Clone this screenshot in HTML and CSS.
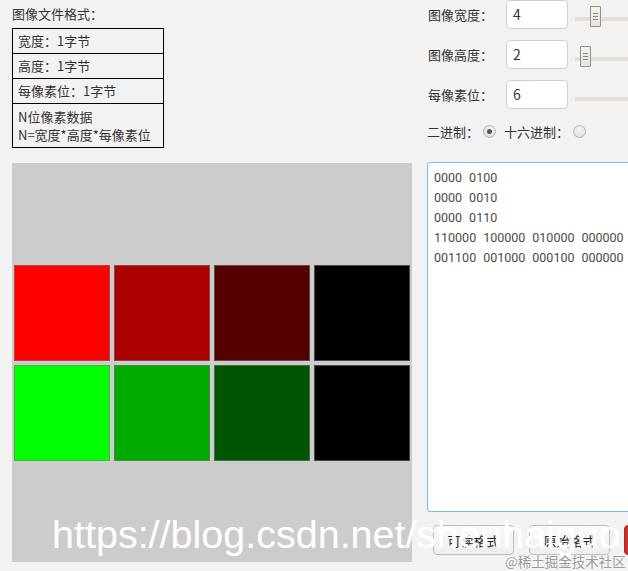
FILE: index.html
```html
<!DOCTYPE html>
<html lang="zh-CN">

<head>
    <meta charset="UTF-8">
    <meta name="viewport" content="width=device-width, initial-scale=1.0">
    <title>图像文件格式</title>
    <link rel="stylesheet" href="styles.css">
</head>

<body>
    <div class="app">
        <div class="left">
            <div class="title">图像文件格式：</div>
            <table class="format">
                <tr><td>宽度：1字节</td></tr>
                <tr><td>高度：1字节</td></tr>
                <tr><td>每像素位：1字节</td></tr>
                <tr><td class="multi">N位像素数据<br>N=宽度*高度*每像素位</td></tr>
            </table>
            <div class="canvas">
                <div class="pixels">
                    <div class="px" style="background: #ff0000"></div>
                    <div class="px" style="background: #aa0000"></div>
                    <div class="px" style="background: #550000"></div>
                    <div class="px" style="background: #000000"></div>
                    <div class="px" style="background: #00ff00"></div>
                    <div class="px" style="background: #00aa00"></div>
                    <div class="px" style="background: #005500"></div>
                    <div class="px" style="background: #000000"></div>
                </div>
            </div>
        </div>

        <div class="right">
            <div class="field">
                <span class="label">图像宽度：</span>
                <div class="num">4</div>
                <div class="slider"><div class="thumb" style="left: 15px"></div></div>
            </div>
            <div class="field">
                <span class="label">图像高度：</span>
                <div class="num">2</div>
                <div class="slider"><div class="thumb" style="left: 5px"></div></div>
            </div>
            <div class="field">
                <span class="label">每像素位：</span>
                <div class="num">6</div>
                <div class="slider"></div>
            </div>
            <div class="radios">
                <span>二进制：</span>
                <span class="radio checked"></span>
                <span>十六进制：</span>
                <span class="radio"></span>
            </div>
            <div class="output">0000 0100
0000 0010
0000 0110
110000 100000 010000 000000
001100 001000 000100 000000</div>
            <div class="buttons">
                <button class="btn">可读格式</button>
                <button class="btn">原始格式</button>
                <button class="btn red"></button>
            </div>
        </div>
    </div>

    <div class="watermark">https://blog.csdn.net/shenhaiguo</div>
    <div class="credit">@稀土掘金技术社区</div>
</body>

</html>
```

FILE: styles.css
```css
html,
body {
    margin: 0;
    height: 100%;
    overflow: hidden;
}

body {
    background: #f2f2f2;
    font-family: "Noto Sans CJK SC", "Noto Sans", sans-serif;
    font-size: 13px;
    color: #333;
    position: relative;
}

.app {
    display: flex;
    gap: 15px;
}

.left {
    padding: 5px 0 0 12px;
    width: 400px;
    flex: none;
}

.title {
    height: 18px;
    line-height: 18px;
}

.format {
    margin-top: 5px;
    width: 152px;
    border-collapse: collapse;
}

.format td {
    border: 1px solid #000;
    height: 24px;
    padding: 0 0 0 5px;
    line-height: 18px;
}

.format td.multi {
    height: 42px;
    line-height: 18px;
    padding-top: 1px;
}

.canvas {
    margin-top: 15px;
    width: 400px;
    height: 399px;
    background: #cccccc;
    display: flex;
    align-items: center;
    justify-content: center;
}

.pixels {
    display: grid;
    grid-template-columns: repeat(4, 96px);
    grid-auto-rows: 96px;
    gap: 4px;
}

.px {
    box-sizing: border-box;
    border: 1px solid rgba(120, 120, 120, 0.6);
}

.right {
    width: 240px;
    flex: none;
}

.field {
    display: flex;
    align-items: center;
    height: 29px;
    margin-bottom: 11px;
}

.label {
    width: 78px;
    padding-left: 1px;
}

.num {
    box-sizing: border-box;
    width: 62px;
    height: 29px;
    background: #fff;
    border: 1px solid #cfcfcf;
    border-radius: 4px;
    padding: 2px 0 0 6px;
    font-size: 14px;
    line-height: 22px;
}

.slider {
    position: relative;
    margin-left: 7px;
    width: 90px;
    height: 4px;
    background: #e4e0d9;
    margin-top: 8px;
}

.thumb {
    position: absolute;
    top: -11px;
    box-sizing: border-box;
    width: 11px;
    height: 21px;
    border: 1px solid #948f88;
    border-radius: 1px;
    background: linear-gradient(#f4f2ee, #e8e4de);
}

.thumb::before {
    content: "";
    position: absolute;
    left: 2px;
    top: 6px;
    width: 5px;
    height: 5px;
    border-top: 1px solid #8a8680;
    border-bottom: 1px solid #8a8680;
}

.thumb::after {
    content: "";
    position: absolute;
    left: 2px;
    top: 9px;
    width: 5px;
    border-top: 1px solid #8a8680;
}

.radios {
    display: flex;
    align-items: center;
    height: 18px;
    margin-top: 13px;
}

.radio {
    box-sizing: border-box;
    width: 13px;
    height: 13px;
    border-radius: 50%;
    border: 1px solid #b5b5b5;
    background: radial-gradient(circle at 50% 35%, #f4f4f4, #d9d9d9);
    margin: 0 8px 0 4px;
    position: relative;
}

.radio.checked::after {
    content: "";
    position: absolute;
    left: 3px;
    top: 3px;
    width: 5px;
    height: 5px;
    border-radius: 50%;
    background: #555;
}

.output {
    margin-top: 22px;
    box-sizing: border-box;
    width: 230px;
    height: 350px;
    background: #fff;
    border: 1px solid #7fb8ea;
    border-radius: 3px;
    padding: 5px 6px;
    white-space: pre;
    font-family: Roboto, "Liberation Sans", sans-serif;
    font-size: 12.5px;
    word-spacing: 3.9px;
    line-height: 20px;
    color: #4a4a4a;
}

.buttons {
    display: flex;
    gap: 15px;
    margin: 13px 0 0 6px;
}

.btn {
    flex: none;
    width: 81px;
    height: 30px;
    background: linear-gradient(#fafafa, #eeeeee);
    border: 1px solid #bdbdbd;
    border-radius: 4px;
    font-family: "Noto Sans CJK SC", sans-serif;
    font-size: 13px;
    color: #222;
    padding: 0;
}

.btn.red {
    background: #c9302c;
    border-color: #a82622;
    margin-left: -1px;
}

.watermark {
    position: absolute;
    left: 52px;
    top: 512px;
    font-family: "Liberation Sans", Arial, sans-serif;
    font-size: 39.5px;
    color: #fff;
    white-space: nowrap;
}

.credit {
    position: absolute;
    left: 505px;
    top: 551px;
    font-size: 13.5px;
    color: #9a9a9a;
    text-shadow: 0 0 2px #fff, 0 0 2px #fff;
    white-space: nowrap;
}
```
